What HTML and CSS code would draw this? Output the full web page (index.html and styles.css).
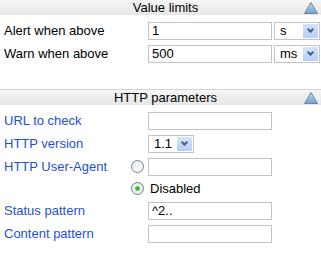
FILE: index.html
```html
<!DOCTYPE html>
<html lang="en">
<head>
    <meta charset="UTF-8">
    <title>Monitor settings</title>
    <link rel="stylesheet" href="styles.css">
</head>
<body>
    <section class="panel">
        <div class="panel-head">
            <span>Value limits</span>
            <svg class="toggle" width="14" height="12" viewBox="0 0 14 12">
                <defs>
                    <linearGradient id="tri1" x1="0" y1="0" x2="0" y2="1">
                        <stop offset="0" stop-color="#bcd8ee"/>
                        <stop offset="1" stop-color="#6fa4cf"/>
                    </linearGradient>
                </defs>
                <polygon points="7,0.5 13.5,11.5 0.5,11.5" fill="url(#tri1)" stroke="#6d8799" stroke-width="1"/>
            </svg>
        </div>
        <div class="form-row">
            <label>Alert when above</label>
            <span></span>
            <div class="field">
                <input type="text" class="text-box" value="1">
                <div class="drop"><span>s</span><i class="drop-btn"></i></div>
            </div>
        </div>
        <div class="form-row">
            <label>Warn when above</label>
            <span></span>
            <div class="field">
                <input type="text" class="text-box" value="500">
                <div class="drop"><span>ms</span><i class="drop-btn"></i></div>
            </div>
        </div>
    </section>

    <section class="panel http">
        <div class="panel-head">
            <span>HTTP parameters</span>
            <svg class="toggle" width="14" height="12" viewBox="0 0 14 12">
                <defs>
                    <linearGradient id="tri2" x1="0" y1="0" x2="0" y2="1">
                        <stop offset="0" stop-color="#bcd8ee"/>
                        <stop offset="1" stop-color="#6fa4cf"/>
                    </linearGradient>
                </defs>
                <polygon points="7,0.5 13.5,11.5 0.5,11.5" fill="url(#tri2)" stroke="#6d8799" stroke-width="1"/>
            </svg>
        </div>
        <div class="form-row">
            <label class="link">URL to check</label>
            <span></span>
            <div class="field"><input type="text" class="text-box"></div>
        </div>
        <div class="form-row">
            <label class="link">HTTP version</label>
            <span></span>
            <div class="field"><div class="drop"><span>1.1</span><i class="drop-btn"></i></div></div>
        </div>
        <div class="form-row">
            <label class="link">HTTP User-Agent</label>
            <span class="radio"></span>
            <div class="field"><input type="text" class="text-box"></div>
        </div>
        <div class="form-row short">
            <label></label>
            <span class="radio checked"></span>
            <div class="field"><span class="opt">Disabled</span></div>
        </div>
        <div class="form-row">
            <label class="link">Status pattern</label>
            <span></span>
            <div class="field"><input type="text" class="text-box" value="^2.."></div>
        </div>
        <div class="form-row">
            <label class="link">Content pattern</label>
            <span></span>
            <div class="field"><input type="text" class="text-box"></div>
        </div>
    </section>
</body>
</html>
```

FILE: styles.css
```css
body {
    margin: 0;
    font-family: "Liberation Sans", Arial, sans-serif;
    font-size: 13px;
    color: #000;
    background: #fff;
}

.panel {
    margin-bottom: 24px;
}

.panel-head {
    position: relative;
    height: 15px;
    line-height: 15px;
    text-align: center;
    padding-left: 10px;
    border-top: 1px solid #d4d4d4;
    background: linear-gradient(to bottom, #f6f6f6, #e6e6e6);
}

.panel:first-child .panel-head {
    border-top: none;
}

.toggle {
    position: absolute;
    right: 3px;
    top: 2px;
}

.form-row {
    display: grid;
    grid-template-columns: 127px 17px 1fr;
    align-items: center;
    height: 23px;
    padding-left: 4px;
}

.form-row:nth-child(2) {
    margin-top: 4px;
}

.form-row.short {
    height: 21px;
}

.link {
    color: #1f4fd6;
}

.field {
    display: flex;
    gap: 2px;
    align-items: center;
}

.text-box {
    box-sizing: border-box;
    width: 124px;
    height: 18px;
    margin: 0;
    padding: 0 3px;
    border: 1px solid #c4c4c4;
    font-family: "Liberation Sans", Arial, sans-serif;
    font-size: 13px;
    color: #000;
}

.drop {
    box-sizing: border-box;
    display: flex;
    align-items: center;
    justify-content: space-between;
    width: 46px;
    height: 18px;
    padding: 0 1px 0 5px;
    border: 1px solid #c4c4c4;
}

.drop-btn {
    width: 15px;
    height: 14px;
    background: linear-gradient(to bottom, #d5e3fb, #b7cdf5);
    position: relative;
}

.drop-btn::after {
    content: "";
    position: absolute;
    left: 5px;
    top: 3px;
    width: 3px;
    height: 3px;
    border-right: 2px solid #4d6185;
    border-bottom: 2px solid #4d6185;
    transform: rotate(45deg);
}

.radio {
    box-sizing: border-box;
    width: 13px;
    height: 13px;
    border: 1px solid #6f8399;
    border-radius: 50%;
    background: radial-gradient(circle at 60% 60%, #ffffff, #dde4ea);
}

.radio.checked {
    background: radial-gradient(circle, #1fa31f 0, #5ccc4a 2px, #f4f6f8 3px, #dde4ea 6px);
}

.opt {
    padding-left: 2px;
}
```
